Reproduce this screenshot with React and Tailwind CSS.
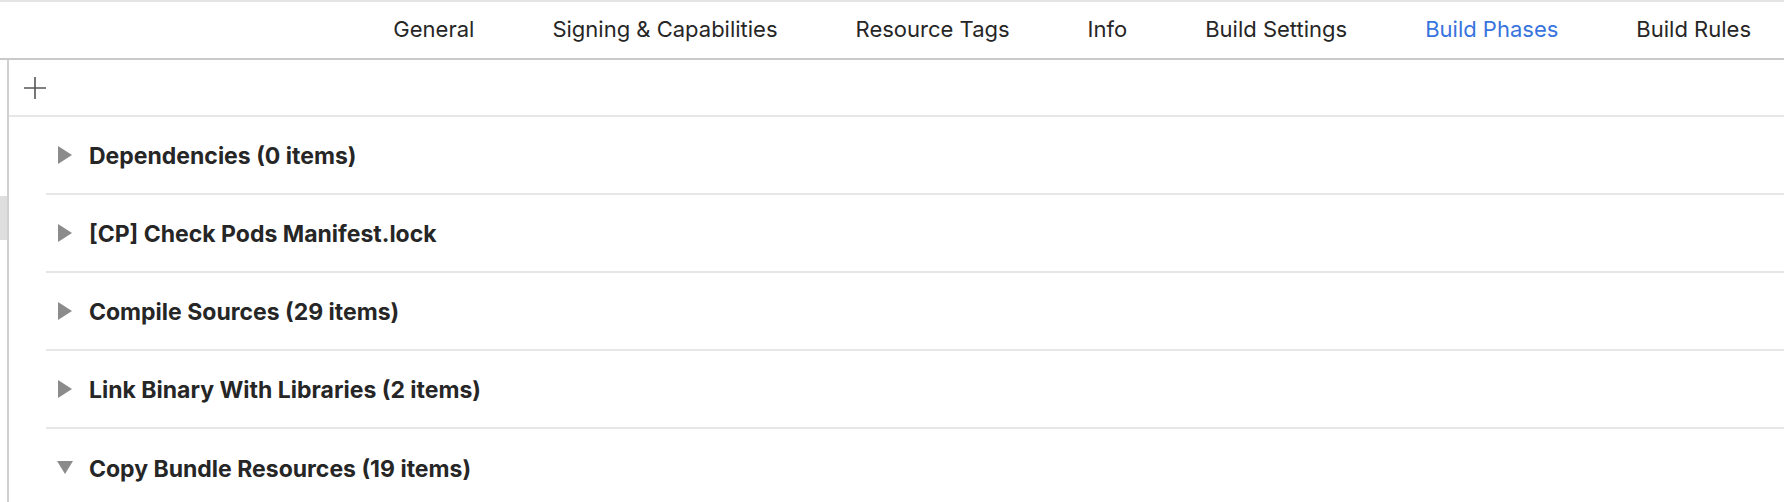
const tabs = [
  'General',
  'Signing & Capabilities',
  'Resource Tags',
  'Info',
  'Build Settings',
  'Build Phases',
  'Build Rules',
];

const phases = [
  { title: 'Dependencies (0 items)', open: false },
  { title: '[CP] Check Pods Manifest.lock', open: false },
  { title: 'Compile Sources (29 items)', open: false },
  { title: 'Link Binary With Libraries (2 items)', open: false },
  { title: 'Copy Bundle Resources (19 items)', open: true },
];

function Disclosure({ open }) {
  if (open) {
    return (
      <svg width="16" height="14" viewBox="0 0 16 14" className="shrink-0">
        <path d="M0 0 L16 0 L8 13 Z" fill="#8b8b8b" />
      </svg>
    );
  }
  return (
    <svg width="16" height="18" viewBox="0 0 16 18" className="shrink-0">
      <path d="M1 0 L15 9 L1 18 Z" fill="#8b8b8b" />
    </svg>
  );
}

export default function App() {
  return (
    <div
      className="w-[1784px] h-[502px] overflow-hidden bg-white flex flex-col"
      style={{ fontFamily: 'Inter, "Liberation Sans", sans-serif' }}
    >
      <div className="h-[2px] bg-[#e4e4e4]" />

      {/* tab bar */}
      <div className="h-[58px] shrink-0 flex items-center justify-end gap-[78px] pr-[33px] pb-[2px] border-b-2 border-[#c9c9c9]">
        {tabs.map((t) => (
          <span
            key={t}
            className={`text-[22px] leading-none ${t === 'Build Phases' ? 'text-[#3874de]' : 'text-[#262626]'}`}
          >
            {t}
          </span>
        ))}
      </div>

      <div className="flex flex-1 min-h-0">
        {/* sidebar edge */}
        <div className="w-[7px] shrink-0 flex flex-col">
          <div className="h-[136px]" />
          <div className="h-[44px] bg-[#dedede]" />
        </div>
        <div className="w-[2px] shrink-0 bg-[#d0d0d0]" />

        <div className="flex-1 flex flex-col">
          <div className="h-[57px] shrink-0 flex items-center pl-[15px] border-b-2 border-[#e6e6e6]">
            <svg width="22" height="22" viewBox="0 0 22 22">
              <path d="M11 0 V22 M0 11 H22" stroke="#555" strokeWidth="1.6" />
            </svg>
          </div>

          {phases.map((p, i) => (
            <div
              key={p.title}
              className={`ml-[37px] h-[78px] shrink-0 flex items-center gap-[16px] pl-[11px] ${i < phases.length - 1 ? 'border-b-2 border-[#e6e6e6]' : ''}`}
            >
              <Disclosure open={p.open} />
              <span className="pt-[2px] text-[23px] font-bold leading-none text-[#262626]">{p.title}</span>
            </div>
          ))}
        </div>
      </div>
    </div>
  );
}
